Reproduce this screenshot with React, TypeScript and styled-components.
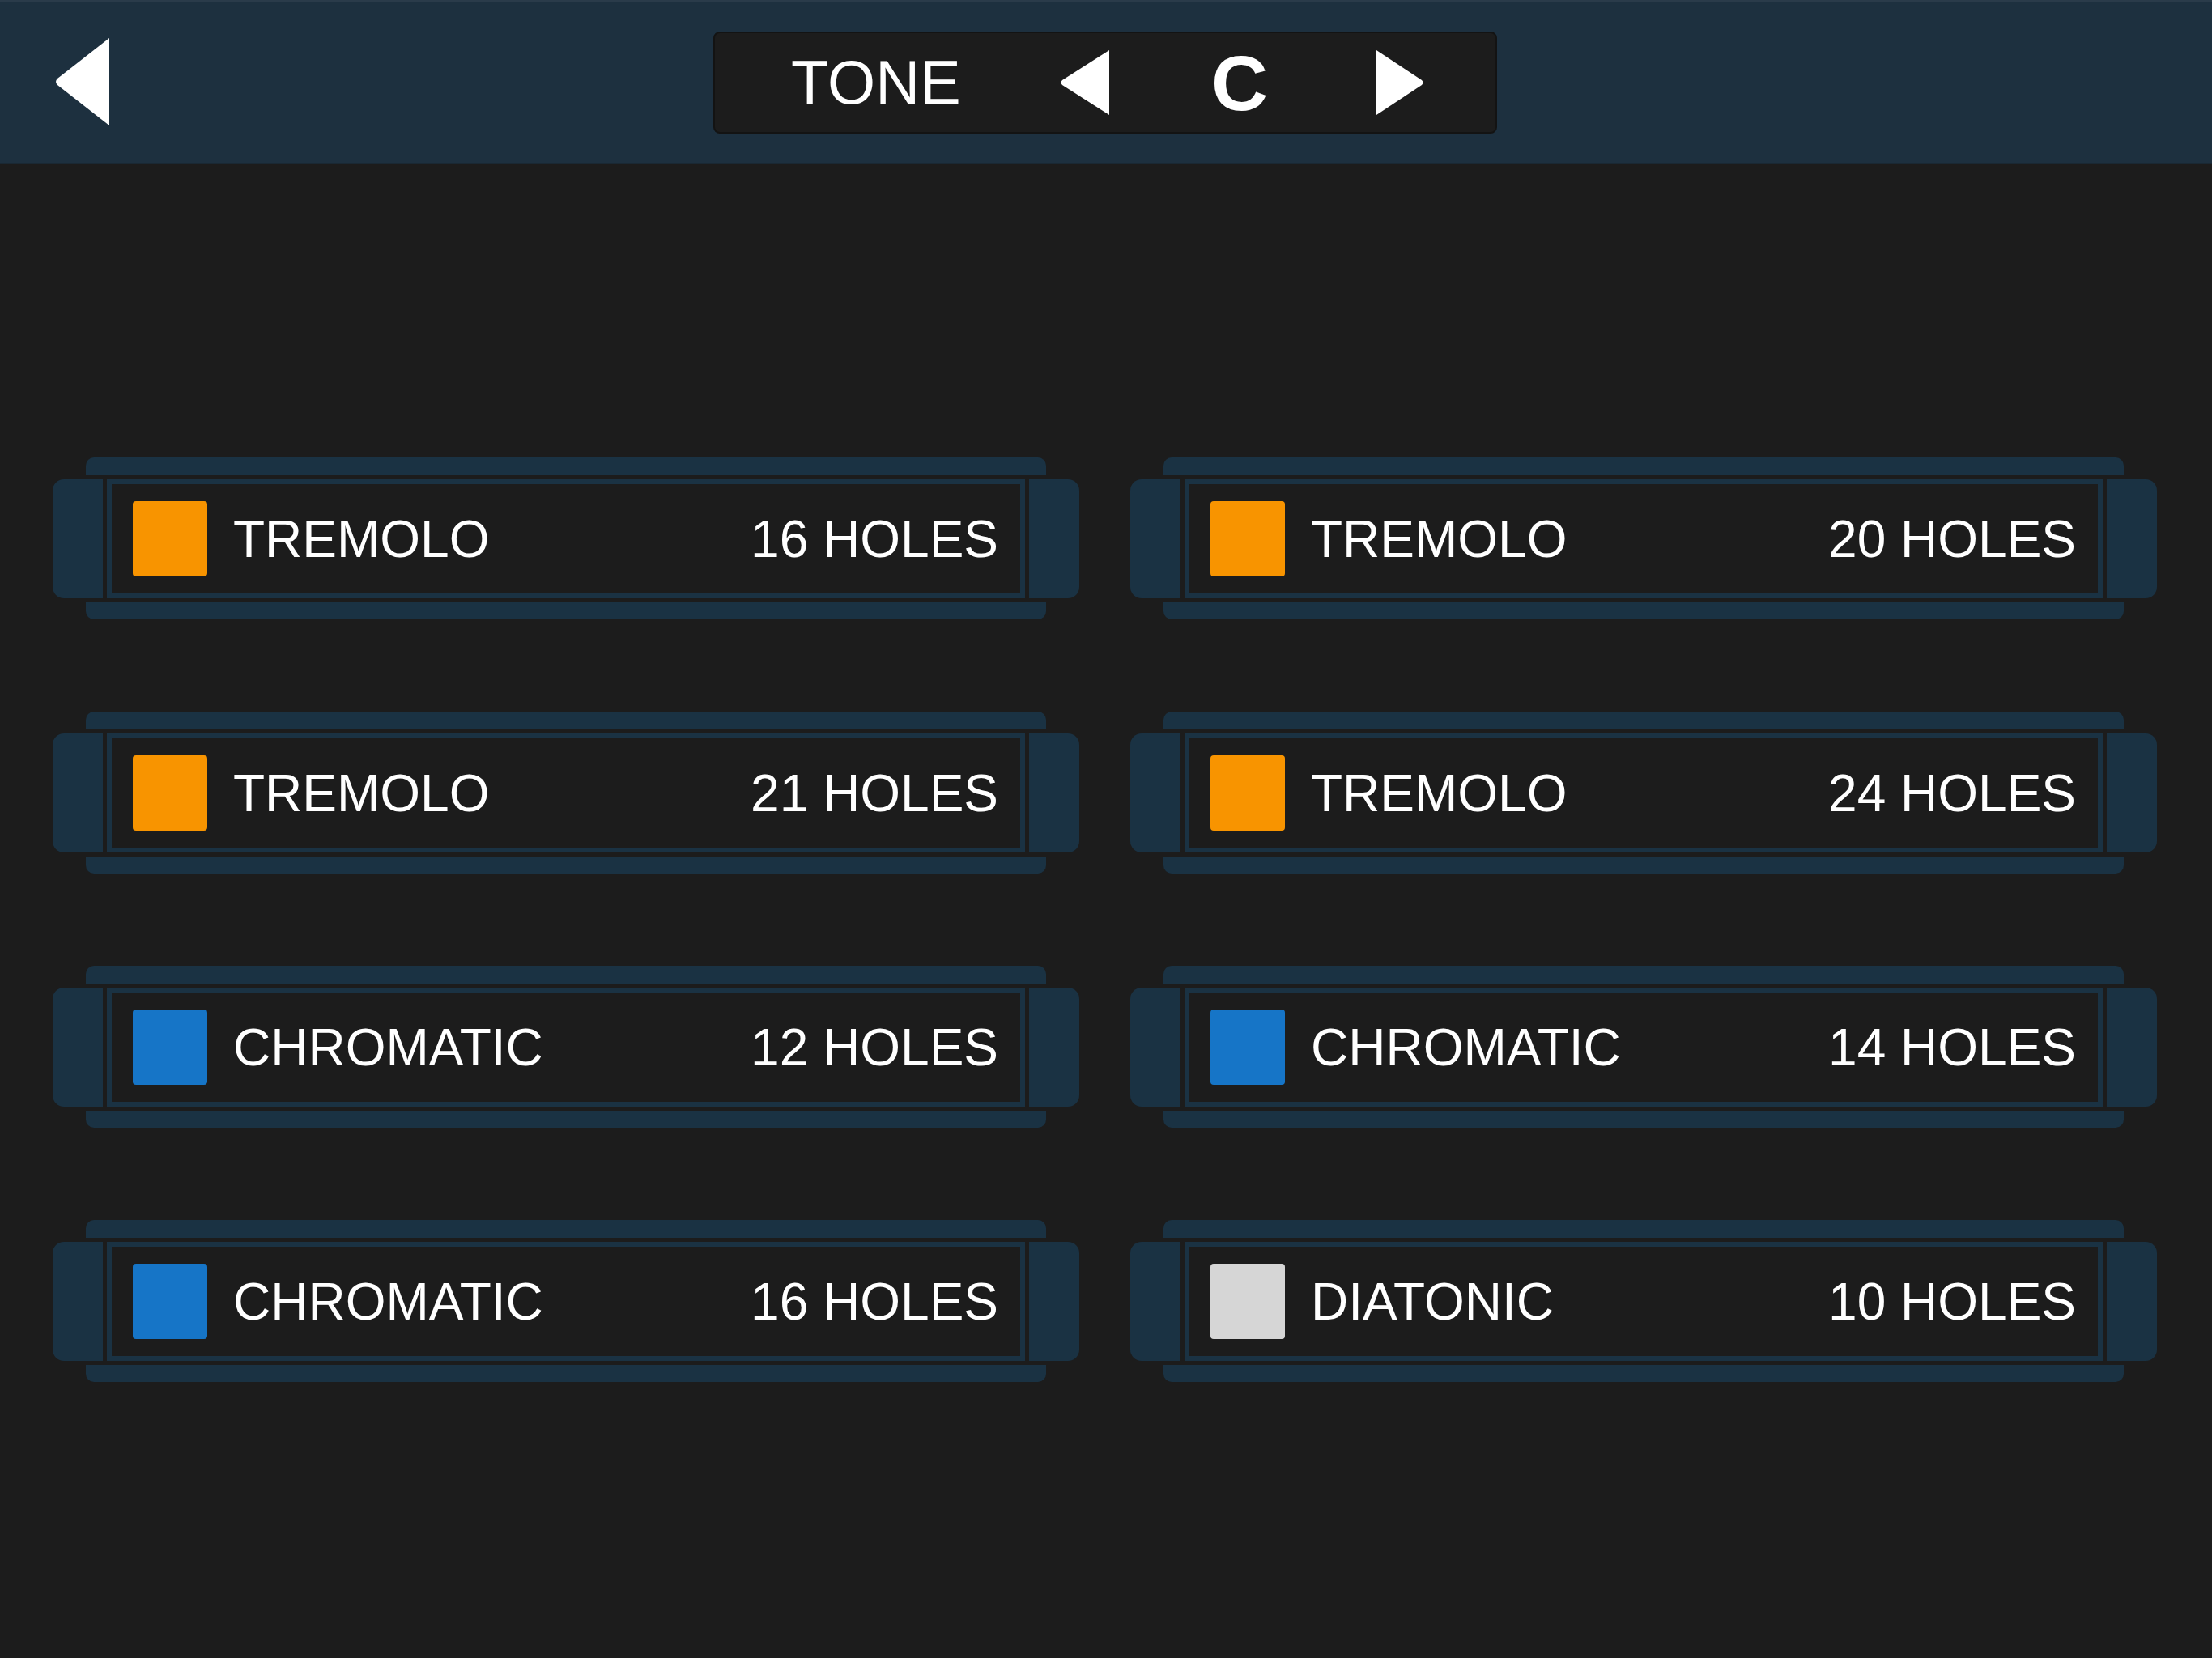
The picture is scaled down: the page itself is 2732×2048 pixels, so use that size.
import styled, { createGlobalStyle } from 'styled-components';

type Kind = 'tremolo' | 'chromatic' | 'diatonic';

const models: { kind: Kind; name: string; holes: number }[] = [
  { kind: 'tremolo', name: 'TREMOLO', holes: 16 },
  { kind: 'tremolo', name: 'TREMOLO', holes: 20 },
  { kind: 'tremolo', name: 'TREMOLO', holes: 21 },
  { kind: 'tremolo', name: 'TREMOLO', holes: 24 },
  { kind: 'chromatic', name: 'CHROMATIC', holes: 12 },
  { kind: 'chromatic', name: 'CHROMATIC', holes: 14 },
  { kind: 'chromatic', name: 'CHROMATIC', holes: 16 },
  { kind: 'diatonic', name: 'DIATONIC', holes: 10 },
];

const swatchColor: Record<Kind, string> = {
  tremolo: '#f89400',
  chromatic: '#1675c7',
  diatonic: '#d6d6d6',
};

const GlobalStyle = createGlobalStyle`
  html, body {
    margin: 0;
    padding: 0;
    background: #1c1c1c;
  }
  body {
    font-family: "Liberation Sans", Arial, sans-serif;
  }
`;

export default function App() {
  return (
    <>
      <GlobalStyle />
      <Page>
        <Header>
          <BackButton aria-label="back">
            <svg width="67" height="108" viewBox="0 0 67 108">
              <path d="M67 0 L67 108 L3 58 Q-1 54 3 50 Z" fill="#fff" />
            </svg>
          </BackButton>
          <ToneBox>
            <ToneLabel>TONE</ToneLabel>
            <ArrowButton aria-label="previous tone" $gap={121}>
              <svg width="60" height="80" viewBox="0 0 60 80">
                <path d="M60 0 L60 80 L2 43 Q-1 40 2 37 Z" fill="#fff" />
              </svg>
            </ArrowButton>
            <ToneValue>C</ToneValue>
            <ArrowButton aria-label="next tone" $gap={134}>
              <svg width="58" height="80" viewBox="0 0 58 80">
                <path d="M0 0 L0 80 L56 43 Q59 40 56 37 Z" fill="#fff" />
              </svg>
            </ArrowButton>
          </ToneBox>
          <span />
        </Header>

        <Grid>
          {models.map((m, i) => (
            <Card key={i}>
              <TopBar />
              <Body>
                <Cap $side="left" />
                <Frame>
                  <Swatch $color={swatchColor[m.kind]} />
                  <Name>{m.name}</Name>
                  <Holes>{m.holes} HOLES</Holes>
                </Frame>
                <Cap $side="right" />
              </Body>
              <BottomBar />
            </Card>
          ))}
        </Grid>
      </Page>
    </>
  );
}

const Page = styled.div`
  width: 2732px;
  height: 2048px;
  background: #1c1c1c;
  overflow: hidden;
`;

const Header = styled.header`
  box-sizing: border-box;
  height: 203px;
  background: #1d303f;
  border-top: 2px solid #2a3b4a;
  border-bottom: 2px solid #1a2833;
  display: grid;
  grid-template-columns: 1fr auto 1fr;
  align-items: center;
`;

const BackButton = styled.div`
  display: flex;
  align-items: center;
  padding-left: 68px;
  padding-bottom: 2px;
`;

const ToneBox = styled.div`
  box-sizing: border-box;
  width: 968px;
  height: 126px;
  background: #1c1c1c;
  border: 2px solid #131313;
  border-radius: 8px;
  display: flex;
  align-items: center;
  padding-left: 94px;
  margin-left: -2px;
`;

const ToneLabel = styled.span`
  color: #fff;
  font-size: 76px;
  line-height: 1;
  width: 212px;
`;

const ArrowButton = styled.div<{ $gap: number }>`
  display: flex;
  align-items: center;
  margin-left: ${p => p.$gap}px;
`;

const ToneValue = styled.span`
  color: #fff;
  font-size: 97px;
  font-weight: bold;
  line-height: 1;
  margin-left: 126px;
  width: 70px;
  margin-top: 2px;
`;

const Grid = styled.main`
  display: grid;
  grid-template-columns: 1268px 1268px;
  column-gap: 63px;
  row-gap: 114px;
  padding: 362px 0 0 65px;
`;

const Card = styled.div`
  height: 200px;
  display: flex;
  flex-direction: column;
  gap: 5px;
`;

const TopBar = styled.div`
  height: 22px;
  margin: 0 41px;
  background: #1a3243;
  border-radius: 10px 10px 0 0;
`;

const BottomBar = styled.div`
  height: 21px;
  margin: 0 41px;
  background: #1a3243;
  border-radius: 0 0 10px 10px;
`;

const Body = styled.div`
  height: 147px;
  display: flex;
  gap: 5px;
`;

const Cap = styled.div<{ $side: 'left' | 'right' }>`
  width: 62px;
  background: #1a3243;
  border-radius: ${p => (p.$side === 'left' ? '14px 0 0 14px' : '0 14px 14px 0')};
`;

const Frame = styled.div`
  flex: 1;
  box-sizing: border-box;
  border: 6px solid #1a3243;
  background: #1c1c1c;
  display: flex;
  align-items: center;
  padding: 0 27px 0 26px;
`;

const Swatch = styled.div<{ $color: string }>`
  width: 92px;
  height: 93px;
  border-radius: 4px;
  background: ${p => p.$color};
  flex-shrink: 0;
`;

const Name = styled.span`
  color: #fff;
  font-size: 64px;
  line-height: 1;
  margin-left: 32px;
  flex: 1;
`;

const Holes = styled.span`
  color: #fff;
  font-size: 64px;
  line-height: 1;
`;
